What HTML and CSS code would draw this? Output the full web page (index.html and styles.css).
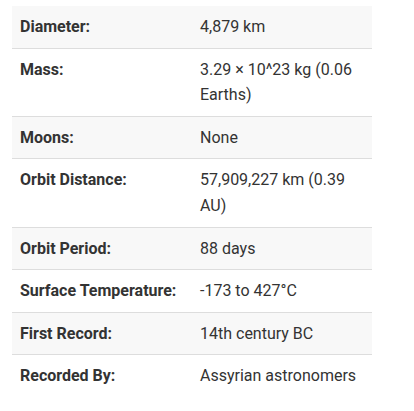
FILE: index.html
```html
<!DOCTYPE html>
<html>
<head>
<meta charset="utf-8">
<link rel="stylesheet" href="styles.css">
</head>
<body>
<div class="wrap">
<table class="facts">
<tbody>
<tr><th>Diameter:</th><td>4,879 km</td></tr>
<tr><th>Mass:</th><td>3.29 × 10^23 kg (0.06 Earths)</td></tr>
<tr><th>Moons:</th><td>None</td></tr>
<tr><th>Orbit Distance:</th><td>57,909,227 km (0.39 AU)</td></tr>
<tr><th>Orbit Period:</th><td>88 days</td></tr>
<tr><th>Surface Temperature:</th><td>-173 to 427°C</td></tr>
<tr><th>First Record:</th><td>14th century BC</td></tr>
<tr><th>Recorded By:</th><td>Assyrian astronomers</td></tr>
</tbody>
</table>
</div>
</body>
</html>
```
FILE: styles.css
```css
html, body {
  margin: 0;
  padding: 0;
  background: #fff;
}
.wrap {
  padding: 6px 12px;
}
.facts {
  width: 360px;
  border-collapse: collapse;
  table-layout: fixed;
  font-family: Roboto, "Liberation Sans", sans-serif;
  font-size: 16px;
  line-height: 1.6;
  color: #333;
}
.facts th, .facts td {
  width: 50%;
  padding: 8px;
  text-align: left;
  vertical-align: top;
  border-bottom: 1px solid #ddd;
}
.facts th {
  font-weight: 700;
}
.facts td {
  font-weight: 400;
}
.facts tr:nth-child(odd) {
  background: #f8f8f8;
}
.facts tr:last-child th, .facts tr:last-child td {
  border-bottom: none;
}
```
